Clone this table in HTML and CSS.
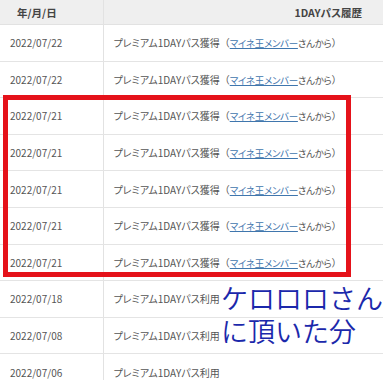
FILE: index.html
```html
<!DOCTYPE html>
<html lang="ja">
<head>
<meta charset="utf-8">
<link rel="stylesheet" href="styles.css">
</head>
<body>
<div class="page">
  <table class="history">
    <thead>
      <tr><th class="c-date">年/月/日</th><th class="c-desc">1DAYパス履歴</th></tr>
    </thead>
    <tbody>
      <tr><td class="c-date">2022/07/22</td><td class="c-desc">プレミアム1DAYパス獲得<span class="paren">（</span><span class="tight"><a href="#">マイネ王メンバー</a>さんから</span><span class="paren">）</span></td></tr>
      <tr><td class="c-date">2022/07/22</td><td class="c-desc">プレミアム1DAYパス獲得<span class="paren">（</span><span class="tight"><a href="#">マイネ王メンバー</a>さんから</span><span class="paren">）</span></td></tr>
      <tr><td class="c-date">2022/07/21</td><td class="c-desc">プレミアム1DAYパス獲得<span class="paren">（</span><span class="tight"><a href="#">マイネ王メンバー</a>さんから</span><span class="paren">）</span></td></tr>
      <tr><td class="c-date">2022/07/21</td><td class="c-desc">プレミアム1DAYパス獲得<span class="paren">（</span><span class="tight"><a href="#">マイネ王メンバー</a>さんから</span><span class="paren">）</span></td></tr>
      <tr><td class="c-date">2022/07/21</td><td class="c-desc">プレミアム1DAYパス獲得<span class="paren">（</span><span class="tight"><a href="#">マイネ王メンバー</a>さんから</span><span class="paren">）</span></td></tr>
      <tr><td class="c-date">2022/07/21</td><td class="c-desc">プレミアム1DAYパス獲得<span class="paren">（</span><span class="tight"><a href="#">マイネ王メンバー</a>さんから</span><span class="paren">）</span></td></tr>
      <tr><td class="c-date">2022/07/21</td><td class="c-desc">プレミアム1DAYパス獲得<span class="paren">（</span><span class="tight"><a href="#">マイネ王メンバー</a>さんから</span><span class="paren">）</span></td></tr>
      <tr><td class="c-date">2022/07/18</td><td class="c-desc">プレミアム1DAYパス利用</td></tr>
      <tr><td class="c-date">2022/07/08</td><td class="c-desc">プレミアム1DAYパス利用</td></tr>
      <tr><td class="c-date">2022/07/06</td><td class="c-desc">プレミアム1DAYパス利用</td></tr>
    </tbody>
  </table>
  <div class="mark-box"></div>
  <div class="note">ケロロロさん<br>に頂いた分</div>
</div>
</body>
</html>
```

FILE: styles.css
```css
html, body {
  margin: 0;
  padding: 0;
  background: #ffffff;
  overflow: hidden;
}

.page {
  position: relative;
  width: 383px;
  height: 380px;
  overflow: hidden;
  font-family: "Noto Sans CJK JP", "Noto Sans", sans-serif;
  font-feature-settings: "palt";
}

.history {
  border-collapse: collapse;
  table-layout: fixed;
  width: 553px;
  color: #555555;
  font-size: 10px;
}

.history th {
  height: 24px;
  padding: 0;
  background: #efefef;
  color: #444444;
  font-weight: bold;
  font-size: 10.5px;
  border-bottom: 1px solid #e2e2e2;
  text-align: center;
}

.history th.c-date {
  width: 103px;
  text-align: left;
  padding-left: 17px;
  box-sizing: border-box;
}

.history td {
  height: 36.6px;
  padding: 0;
  border-bottom: 1px solid #e4e4e4;
  box-sizing: border-box;
  white-space: nowrap;
}

.history .c-date {
  border-right: 1px solid #e2e2e2;
}

.history td.c-date {
  padding-left: 10px;
}

.history td.c-desc {
  padding-left: 10px;
}

.history .paren {
  font-feature-settings: normal;
}

.history .tight {
  font-size: 9.5px;
  letter-spacing: -0.3px;
}

.history a {
  color: #3f76ad;
  text-decoration: underline;
}

.mark-box {
  position: absolute;
  left: 3px;
  top: 95px;
  width: 338px;
  height: 172px;
  border: 5px solid #e5121a;
}

.note {
  position: absolute;
  left: 221px;
  top: 281px;
  color: #1b28ab;
  font-size: 27px;
  line-height: 33px;
  font-weight: 350;
  font-feature-settings: normal;
  white-space: nowrap;
}
```
